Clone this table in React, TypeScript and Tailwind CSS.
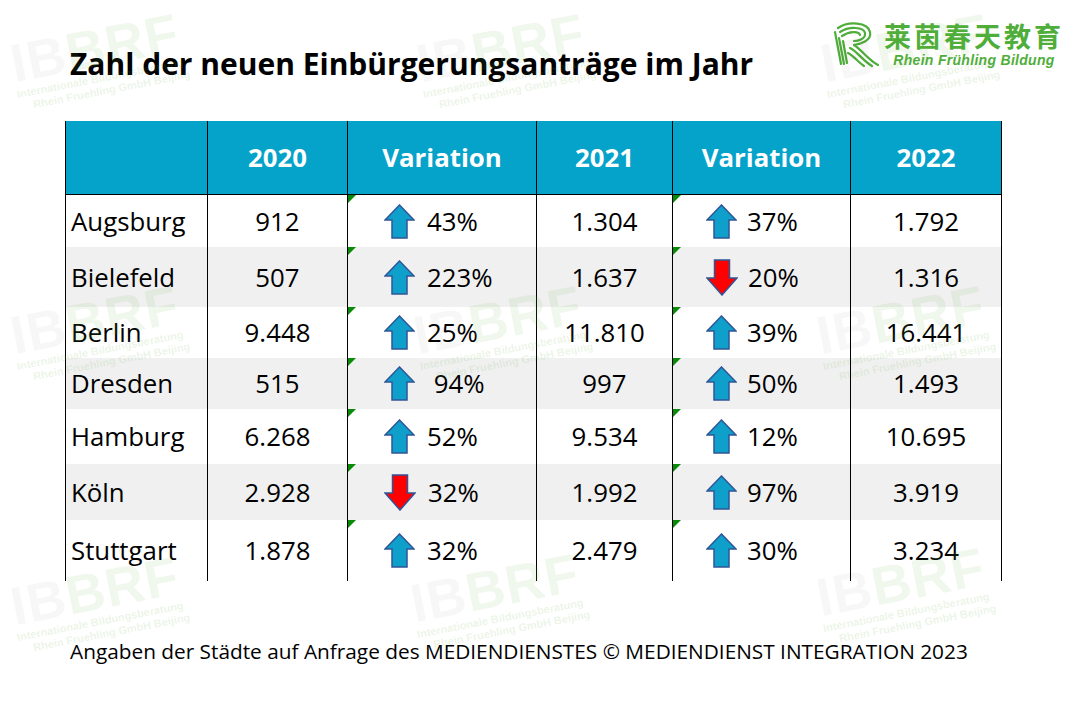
import React from 'react';

type Dir = 'up' | 'down';

interface Row {
  city: string;
  y2020: string;
  v1: [Dir, string];
  y2021: string;
  v2: [Dir, string];
  y2022: string;
  h: string;
  gray: boolean;
}

const rows: Row[] = [
  { city: 'Augsburg', y2020: '912', v1: ['up', '43%'], y2021: '1.304', v2: ['up', '37%'], y2022: '1.792', h: 'h-[52px]', gray: false },
  { city: 'Bielefeld', y2020: '507', v1: ['up', '223%'], y2021: '1.637', v2: ['down', '20%'], y2022: '1.316', h: 'h-[60px]', gray: true },
  { city: 'Berlin', y2020: '9.448', v1: ['up', '25%'], y2021: '11.810', v2: ['up', '39%'], y2022: '16.441', h: 'h-[51px]', gray: false },
  { city: 'Dresden', y2020: '515', v1: ['up', '\u00a094%'], y2021: '997', v2: ['up', '50%'], y2022: '1.493', h: 'h-[51px]', gray: true },
  { city: 'Hamburg', y2020: '6.268', v1: ['up', '52%'], y2021: '9.534', v2: ['up', '12%'], y2022: '10.695', h: 'h-[55px]', gray: false },
  { city: 'Köln', y2020: '2.928', v1: ['down', '32%'], y2021: '1.992', v2: ['up', '97%'], y2022: '3.919', h: 'h-[56px]', gray: true },
  { city: 'Stuttgart', y2020: '1.878', v1: ['up', '32%'], y2021: '2.479', v2: ['up', '30%'], y2022: '3.234', h: 'h-[61px]', gray: false },
];

const cols = 'grid grid-cols-[142px_140px_189px_136px_178px_151px]';

function Arrow({ dir }: { dir: Dir }) {
  if (dir === 'up') {
    return (
      <svg width="31" height="35" viewBox="0 0 31 35" className="shrink-0">
        <path
          d="M15.5 1 L30 16 L23 16 L23 34 L8 34 L8 16 L1 16 Z"
          fill="#0ea0cb"
          stroke="#2f5597"
          strokeWidth="1.5"
        />
      </svg>
    );
  }
  return (
    <svg width="32" height="37" viewBox="0 0 32 37" className="shrink-0">
      <path
        d="M8.5 1 L23.5 1 L23.5 19 L31 19 L16 36 L1 19 L8.5 19 Z"
        fill="#ff0000"
        stroke="#2f5597"
        strokeWidth="1.5"
      />
    </svg>
  );
}

// kleines gruenes Dreieck (Excel-Hinweis)
function Flag() {
  return (
    <svg width="8" height="8" viewBox="0 0 8 8" className="absolute left-0 top-0">
      <path d="M0 0 L8 0 L0 8 Z" fill="#098a09" />
    </svg>
  );
}

function VarCell({ v, pl, gap }: { v: [Dir, string]; pl: string; gap: string }) {
  return (
    <div className={`relative flex items-center border-r border-black ${pl} ${gap}`}>
      <Flag />
      <Arrow dir={v[0]} />
      <span className="whitespace-pre">{v[1]}</span>
    </div>
  );
}

function Watermark({ className }: { className: string }) {
  return (
    <div className={`pointer-events-none absolute -rotate-[11deg] whitespace-nowrap ${className}`}>
      <div className="font-['Liberation_Sans'] text-[54px] font-bold leading-[50px] tracking-[1px]">
        <span className="text-[rgba(0,0,0,0.03)]">IB</span>
        <span className="text-[rgba(110,180,70,0.1)]">BRF</span>
      </div>
      <div className="font-['Liberation_Sans'] text-[11px] font-bold leading-[13px] text-[rgba(110,180,70,0.14)]">
        <div>Internationale Bildungsberatung</div>
        <div className="pl-[14px]">Rhein Fruehling GmbH Beijing</div>
      </div>
    </div>
  );
}

function Logo() {
  return (
    <div className="flex items-center gap-[4px]">
      <svg width="48" height="48" viewBox="0 0 48 48" className="shrink-0">
        <g fill="none" stroke="#4fae3a" strokeWidth="2.2" strokeLinecap="round">
          <path d="M6 8 C16 1, 36 2, 38 12 C40 21, 28 24, 22 25" />
          <path d="M8 12 C17 6, 32 7, 33 13 C34 19, 26 21, 22 21" />
          <path d="M10 16 C17 11, 27 11, 28 15" />
          <path d="M3 12 L9 44" />
          <path d="M7 18 L12 44" />
          <path d="M11 21 L15 43" />
          <path d="M22 25 C30 30, 36 40, 46 45" />
          <path d="M18 28 C26 32, 31 41, 40 46" />
          <path d="M16 33 C22 36, 26 42, 32 46" />
        </g>
      </svg>
      <div className="flex flex-col items-center">
        <div className="font-['Noto_Sans_CJK_SC',sans-serif] text-[27px] font-bold leading-[32px] tracking-[3px] text-[#4fae3a]">
          莱茵春天教育
        </div>
        <div className="font-['Liberation_Sans',sans-serif] text-[14px] font-bold italic leading-[16px] tracking-[0.3px] text-[#4fae3a]">
          Rhein Frühling Bildung
        </div>
      </div>
    </div>
  );
}

export default function App() {
  return (
    <div className="relative h-[708px] w-[1080px] overflow-hidden bg-white font-['Open_Sans',sans-serif] text-black">
      <div className="flex items-start justify-between pt-[20px] pr-[16px]">
        <h1 className="ml-[70px] mt-[25px] text-[30px] font-bold leading-[38px]">
          Zahl der neuen Einbürgerungsanträge im Jahr
        </h1>
        <Logo />
      </div>

      <div className="ml-[65px] mt-[38px] w-[937px] border-l border-black text-[25.8px]">
        <div className={`${cols} h-[74px] border-b border-black bg-[#05a2c9] font-bold text-white`}>
          <div className="border-r border-black" />
          <div className="flex items-center justify-center border-r border-black">2020</div>
          <div className="flex items-center justify-center border-r border-black">Variation</div>
          <div className="flex items-center justify-center border-r border-black">2021</div>
          <div className="flex items-center justify-center border-r border-black">Variation</div>
          <div className="flex items-center justify-center border-r border-black">2022</div>
        </div>
        {rows.map((r) => (
          <div key={r.city} className={`${cols} ${r.h} ${r.gray ? 'bg-[#f0f0f0]' : 'bg-white'}`}>
            <div className="flex items-center border-r border-black pl-[5px]">{r.city}</div>
            <div className="flex items-center justify-center border-r border-black">{r.y2020}</div>
            <VarCell v={r.v1} pl="pl-[36px]" gap="gap-[12px]" />
            <div className="flex items-center justify-center border-r border-black">{r.y2021}</div>
            <VarCell v={r.v2} pl="pl-[33px]" gap="gap-[10px]" />
            <div className="flex items-center justify-center border-r border-black">{r.y2022}</div>
          </div>
        ))}
      </div>

      <p className="ml-[70px] mt-[56px] text-[20.8px] leading-[28px]">
        Angaben der Städte auf Anfrage des MEDIENDIENSTES © MEDIENDIENST INTEGRATION 2023
      </p>

      <Watermark className="left-[12px] top-[22px]" />
      <Watermark className="left-[418px] top-[22px]" />
      <Watermark className="left-[822px] top-[22px]" />
      <Watermark className="left-[12px] top-[294px]" />
      <Watermark className="left-[415px] top-[294px]" />
      <Watermark className="left-[818px] top-[294px]" />
      <Watermark className="left-[12px] top-[565px]" />
      <Watermark className="left-[412px] top-[562px]" />
      <Watermark className="left-[818px] top-[556px]" />
    </div>
  );
}
